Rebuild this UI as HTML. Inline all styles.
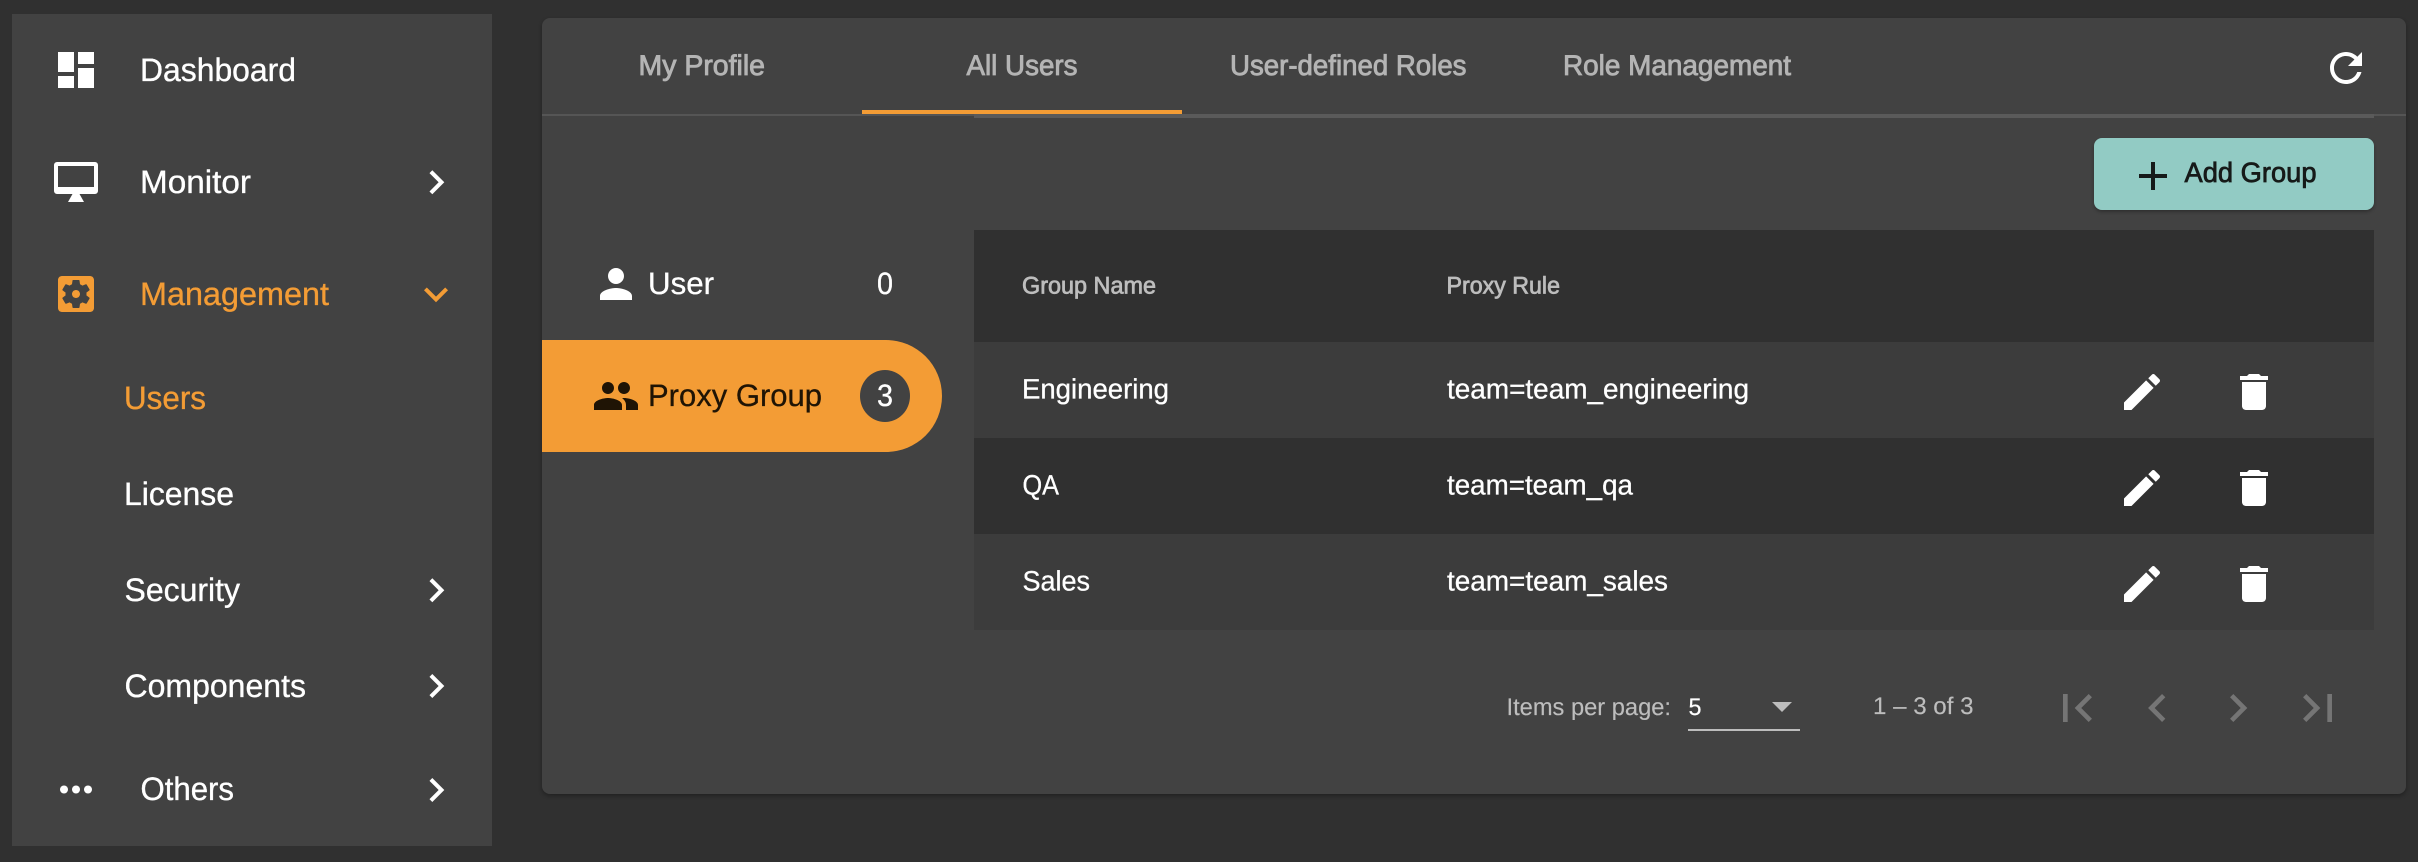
<!DOCTYPE html>
<html lang="en">
<head>
<meta charset="utf-8">
<title>All Users</title>
<style>
html,body{margin:0;padding:0;width:2418px;height:862px;overflow:hidden;background:#303030}
.box{position:absolute}
#side{left:12px;top:14px;width:480px;height:832px;background:#424242}
#panel{left:542px;top:18px;width:1864px;height:776px;background:#424242;border-radius:8px;box-shadow:0 2px 4px rgba(0,0,0,.3)}
#tabline1{left:542px;top:114px;width:1864px;height:2px;background:#555}
#tabline2{left:974px;top:114px;width:1400px;height:4px;background:#5a5a5a}
#ink{left:862px;top:110px;width:320px;height:4px;background:#f39c35}
#btn{left:2094px;top:138px;width:280px;height:72px;background:#92cbc4;border-radius:8px;box-shadow:0 2px 3px rgba(0,0,0,.28)}
#pill{left:542px;top:340px;width:400px;height:112px;background:#f39c35;border-radius:0 56px 56px 0}
#badge{left:860px;top:370px;width:50px;height:52px;background:#424242;border-radius:50%}
.row{left:974px;width:1400px;height:96px}
#th{left:974px;top:230px;width:1400px;height:112px;background:#303030}
#r1{top:342px;background:#3c3c3c}
#r2{top:438px;background:#303030}
#r3{top:534px;background:#3c3c3c}
#sel{left:1688px;top:729px;width:112px;height:2px;background:#bdbdbd}
svg{position:absolute;left:0;top:0}
text{font-family:"Liberation Sans",Arial,sans-serif;text-rendering:geometricPrecision}
.w{fill:#fff}
.o{fill:#f39c35}
.n{font-size:32.5px;stroke-width:.35px}
.n.w{stroke:#fff}
.n.o{stroke:#f39c35}
.tab{font-size:28.5px;fill:#b4b4b4;stroke:#b4b4b4;stroke-width:.85px}
.hd{font-size:24px;fill:#bdbdbd;stroke:#bdbdbd;stroke-width:.75px}
.td{font-size:28px;fill:#fff;stroke:#fff;stroke-width:.3px}
.pg{font-size:24px;fill:#bdbdbd;stroke:#bdbdbd;stroke-width:.15px}
.nav{fill:#757575}
</style>
</head>
<body>
<div class="box" id="side"></div>
<div class="box" id="panel"></div>
<div class="box" id="tabline1"></div>
<div class="box" id="tabline2"></div>
<div class="box" id="ink"></div>
<div class="box" id="btn"></div>
<div class="box" id="th"></div>
<div class="box row" id="r1"></div>
<div class="box row" id="r2"></div>
<div class="box row" id="r3"></div>
<div class="box" id="pill"></div>
<div class="box" id="badge"></div>
<div class="box" id="sel"></div>

<svg width="2418" height="862" viewBox="0 0 2418 862" xmlns="http://www.w3.org/2000/svg">
<!-- sidebar icons -->
<path class="w" transform="translate(52,46) scale(2)" d="M3 13h8V3H3v10zm0 8h8v-6H3v6zm10 0h8V11h-8v10zm0-18v6h8V3h-8z"/>
<path class="w" fill-rule="evenodd" d="M57 162h38a3 3 0 0 1 3 3v26a3 3 0 0 1-3 3H57a3 3 0 0 1-3-3v-26a3 3 0 0 1 3-3zm1 4v21h36v-21zM72.500 194h7l4.500 8H68z"/>
<path class="o" fill-rule="evenodd" transform="translate(52,270) scale(2)" d="M12 10c-1.1 0-2 .9-2 2s.9 2 2 2 2-.9 2-2-.9-2-2-2zm7-7H5c-1.11 0-2 .9-2 2v14c0 1.1.89 2 2 2h14c1.11 0 2-.9 2-2V5c0-1.1-.89-2-2-2zm-1.75 9c0 .23-.02.46-.05.68l1.48 1.16c.13.11.17.3.08.45l-1.4 2.42c-.09.15-.27.21-.43.15l-1.74-.7c-.36.28-.76.51-1.18.69l-.26 1.85c-.03.17-.18.3-.35.3h-2.8c-.17 0-.32-.13-.35-.3l-.26-1.85c-.43-.18-.82-.41-1.18-.69l-1.74.7c-.16.06-.34 0-.43-.15l-1.4-2.42c-.09-.15-.05-.34.08-.45l1.48-1.16c-.03-.22-.05-.45-.05-.68 0-.23.02-.46.05-.68l-1.48-1.16c-.13-.11-.17-.3-.08-.45l1.4-2.42c.09-.15.27-.21.43-.15l1.74.7c.36-.28.76-.51 1.18-.69l.26-1.85c.03-.17.18-.3.35-.3h2.8c.17 0 .32.13.35.3l.26 1.85c.43.18.82.41 1.18.69l1.74-.7c.16-.06.34 0 .43.15l1.4 2.42c.09.15.05.34-.08.45l-1.48 1.16c.03.22.05.45.05.68z"/>
<circle class="w" cx="64" cy="789.5" r="4"/><circle class="w" cx="76" cy="789.5" r="4"/><circle class="w" cx="88" cy="789.5" r="4"/>

<!-- sidebar chevrons -->
<path class="w" transform="translate(412.3,158.3) scale(2)" d="M10 6L8.59 7.41 13.17 12l-4.58 4.59L10 18l6-6z"/>
<path class="o" transform="translate(412,270.3) scale(2)" d="M16.59 8.59L12 13.17 7.41 8.59 6 10l6 6 6-6z"/>
<path class="w" transform="translate(412.3,566.3) scale(2)" d="M10 6L8.59 7.41 13.17 12l-4.58 4.59L10 18l6-6z"/>
<path class="w" transform="translate(412.3,662) scale(2)" d="M10 6L8.59 7.41 13.17 12l-4.58 4.59L10 18l6-6z"/>
<path class="w" transform="translate(412.3,766) scale(2)" d="M10 6L8.59 7.41 13.17 12l-4.58 4.59L10 18l6-6z"/>

<!-- sidebar text -->
<text class="n w" x="140" y="81" textLength="156" lengthAdjust="spacingAndGlyphs">Dashboard</text>
<text class="n w" x="140" y="193" textLength="111" lengthAdjust="spacingAndGlyphs">Monitor</text>
<text class="n o" x="140" y="305" textLength="189" lengthAdjust="spacingAndGlyphs">Management</text>
<text class="n o" x="124" y="409" textLength="82" lengthAdjust="spacingAndGlyphs">Users</text>
<text class="n w" x="124" y="505" textLength="110" lengthAdjust="spacingAndGlyphs">License</text>
<text class="n w" x="124.500" y="601" textLength="115.500" lengthAdjust="spacingAndGlyphs">Security</text>
<text class="n w" x="124.500" y="697" textLength="181.500" lengthAdjust="spacingAndGlyphs">Components</text>
<text class="n w" x="140.500" y="800" textLength="93.500" lengthAdjust="spacingAndGlyphs">Others</text>

<!-- tabs -->
<text class="tab" x="638.500" y="75" textLength="126.500" lengthAdjust="spacingAndGlyphs">My Profile</text>
<text class="tab" x="966.500" y="75" textLength="111" lengthAdjust="spacingAndGlyphs">All Users</text>
<text class="tab" x="1230" y="75" textLength="236.500" lengthAdjust="spacingAndGlyphs">User-defined Roles</text>
<text class="tab" x="1563" y="75" textLength="228" lengthAdjust="spacingAndGlyphs">Role Management</text>
<path class="w" transform="translate(2322,44) scale(2)" d="M17.65 6.35C16.2 4.9 14.21 4 12 4c-4.42 0-7.99 3.58-7.99 8s3.57 8 7.99 8c3.73 0 6.84-2.55 7.730-6h-2.08c-.82 2.33-3.04 4-5.65 4-3.31 0-6-2.69-6-6s2.69-6 6-6c1.66 0 3.14.69 4.22 1.78L13 11h7V4l-2.35 2.35z"/>

<!-- add group -->
<path fill="#161a19" transform="translate(2129,152) scale(2)" d="M19 13h-6v6h-2v-6H5v-2h6V5h2v6h6v2z"/>
<text x="2184.500" y="182" font-size="28" fill="#161a19" stroke="#161a19" stroke-width=".75" textLength="132" lengthAdjust="spacingAndGlyphs">Add Group</text>

<!-- left list -->
<path class="w" transform="translate(592,260) scale(2)" d="M12 12c2.21 0 4-1.79 4-4s-1.79-4-4-4-4 1.79-4 4 1.79 4 4 4zm0 2c-2.67 0-8 1.34-8 4v2h16v-2c0-2.66-5.33-4-8-4z"/>
<text x="648" y="294" font-size="31" class="w" stroke="#fff" stroke-width=".3" textLength="66" lengthAdjust="spacingAndGlyphs">User</text>
<text x="877" y="294" font-size="31" class="w" stroke="#fff" stroke-width=".3" textLength="16" lengthAdjust="spacingAndGlyphs">0</text>
<path fill="#1f1405" transform="translate(592,372) scale(2)" d="M16 11c1.66 0 2.99-1.34 2.99-3S17.66 5 16 5c-1.66 0-3 1.34-3 3s1.34 3 3 3zm-8 0c1.66 0 2.99-1.34 2.99-3S9.66 5 8 5C6.34 5 5 6.34 5 8s1.34 3 3 3zm0 2c-2.33 0-7 1.17-7 3.5V19h14v-2.5c0-2.33-4.67-3.5-7-3.5zm8 0c-.29 0-.62.02-.97.05 1.16.84 1.97 1.97 1.97 3.45V19h6v-2.5c0-2.33-4.67-3.5-7-3.5z"/>
<text x="648" y="406" font-size="31" fill="#1f1405" stroke="#1f1405" stroke-width=".3" textLength="174" lengthAdjust="spacingAndGlyphs">Proxy Group</text>
<text x="877" y="406" font-size="31" class="w" stroke="#fff" stroke-width=".3" textLength="16" lengthAdjust="spacingAndGlyphs">3</text>

<!-- table -->
<text class="hd" x="1022" y="293.300" textLength="134" lengthAdjust="spacingAndGlyphs">Group Name</text>
<text class="hd" x="1446.500" y="293.300" textLength="113.500" lengthAdjust="spacingAndGlyphs">Proxy Rule</text>

<text class="td" x="1022" y="398.700" textLength="147" lengthAdjust="spacingAndGlyphs">Engineering</text>
<text class="td" x="1447" y="398.700" textLength="302" lengthAdjust="spacingAndGlyphs">team=team_engineering</text>
<text class="td" x="1022.500" y="494.700" textLength="36.500" lengthAdjust="spacingAndGlyphs">QA</text>
<text class="td" x="1447" y="494.700" textLength="186" lengthAdjust="spacingAndGlyphs">team=team_qa</text>
<text class="td" x="1022.500" y="590.700" textLength="67.500" lengthAdjust="spacingAndGlyphs">Sales</text>
<text class="td" x="1447" y="590.700" textLength="221" lengthAdjust="spacingAndGlyphs">team=team_sales</text>

<!-- row actions -->
<path class="w" transform="translate(2118,368) scale(2)" d="M3 17.25V21h3.75L17.81 9.94l-3.75-3.75L3 17.25zM20.71 7.04c.39-.39.39-1.02 0-1.41l-2.34-2.34c-.39-.39-1.02-.39-1.41 0l-1.83 1.83 3.75 3.75 1.83-1.83z"/>
<path class="w" transform="translate(2230,368) scale(2)" d="M6 19c0 1.1.9 2 2 2h8c1.1 0 2-.9 2-2V7H6v12zM19 4h-3.5l-1-1h-5l-1 1H5v2h14V4z"/>
<path class="w" transform="translate(2118,464) scale(2)" d="M3 17.25V21h3.75L17.81 9.94l-3.75-3.75L3 17.25zM20.71 7.04c.39-.39.39-1.02 0-1.41l-2.34-2.34c-.39-.39-1.02-.39-1.41 0l-1.83 1.83 3.75 3.75 1.83-1.83z"/>
<path class="w" transform="translate(2230,464) scale(2)" d="M6 19c0 1.1.9 2 2 2h8c1.1 0 2-.9 2-2V7H6v12zM19 4h-3.5l-1-1h-5l-1 1H5v2h14V4z"/>
<path class="w" transform="translate(2118,560) scale(2)" d="M3 17.25V21h3.75L17.81 9.94l-3.75-3.75L3 17.25zM20.71 7.04c.39-.39.39-1.02 0-1.41l-2.34-2.34c-.39-.39-1.02-.39-1.41 0l-1.83 1.83 3.75 3.75 1.83-1.83z"/>
<path class="w" transform="translate(2230,560) scale(2)" d="M6 19c0 1.1.9 2 2 2h8c1.1 0 2-.9 2-2V7H6v12zM19 4h-3.5l-1-1h-5l-1 1H5v2h14V4z"/>

<!-- paginator -->
<text class="pg" x="1506.500" y="715" textLength="164.500" lengthAdjust="spacingAndGlyphs">Items per page:</text>
<text x="1688.500" y="715" font-size="24" class="w" stroke="#fff" stroke-width=".2" textLength="13" lengthAdjust="spacingAndGlyphs">5</text>
<path fill="#bdbdbd" d="M1772 702h20l-10 10z"/>
<text class="pg" x="1873" y="714" textLength="100.500" lengthAdjust="spacingAndGlyphs">1 – 3 of 3</text>
<path class="nav" transform="translate(2049,680) scale(2.333)" d="M18.41 16.59L13.82 12l4.59-4.59L17 6l-6 6 6 6zM6 6h2v12H6z"/>
<path class="nav" transform="translate(2129.400,680) scale(2.333)" d="M15.41 7.41L14 6l-6 6 6 6 1.41-1.41L10.83 12z"/>
<path class="nav" transform="translate(2210,680) scale(2.333)" d="M10 6L8.59 7.41 13.17 12l-4.58 4.59L10 18l6-6z"/>
<path class="nav" transform="translate(2290,680) scale(2.333)" d="M5.59 7.41L10.18 12l-4.59 4.59L7 18l6-6-6-6zM16 6h2v12h-2z"/>
</svg>
</body>
</html>
